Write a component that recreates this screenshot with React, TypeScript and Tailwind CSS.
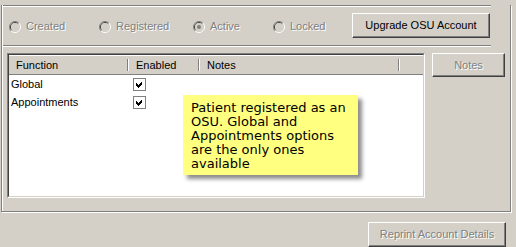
import React from "react"

const etched = "text-[#808080] [text-shadow:1px_1px_0_#fff]"
const raised =
    "border border-t-white border-l-white border-r-[#404040] border-b-[#404040] shadow-[inset_-1px_-1px_0_#808080] bg-[#d4d0c8]"

const Radio = ({ label, checked, width }: { label: string; checked?: boolean; width: string }) => (
    <div className={`flex items-center gap-[5px] ${width}`}>
        <svg width="12" height="12" viewBox="0 0 12 12">
            <path d="M2.1 9.9 A5.5 5.5 0 0 1 9.9 2.1" fill="none" stroke="#808080" />
            <path d="M9.9 2.1 A5.5 5.5 0 0 1 2.1 9.9" fill="none" stroke="#ffffff" />
            <path d="M2.8 9.2 A4.5 4.5 0 0 1 9.2 2.8" fill="none" stroke="#404040" />
            <path d="M9.2 2.8 A4.5 4.5 0 0 1 2.8 9.2" fill="none" stroke="#d4d0c8" />
            <circle cx="6" cy="6" r="4" fill="#d4d0c8" />
            {checked && <circle cx="6" cy="6" r="2" fill="#808080" />}
        </svg>
        <span className={etched}>{label}</span>
    </div>
)

const Check = () => (
    <div className="w-[13px] h-[13px] border border-[#808080] bg-white flex items-center justify-center">
        <svg width="9" height="9" viewBox="0 0 9 9" shapeRendering="crispEdges">
            <path d="M1 3h1v1h1v1h1v-1h1v-1h1v-1h1v3h-1v1h-1v1h-1v1h-1v-1h-1v-1h-1z" fill="#000" />
        </svg>
    </div>
)

const HeaderCell = ({ label, width }: { label: string; width: string }) => (
    <div className={`flex items-center justify-between h-full ${width}`}>
        <span className="pl-[7px] text-black">{label}</span>
        <span className="w-[2px] h-[12px] border-l border-l-[#808080] border-r border-r-white" />
    </div>
)

const Row = ({ name }: { name: string }) => (
    <div className="flex items-center h-[18px]">
        <div className="w-[120px] pl-[2px] text-black">{name}</div>
        <div className="pl-[4px]">
            <Check />
        </div>
    </div>
)

export default function App() {
    return (
        <div className="relative w-[516px] h-[247px] overflow-hidden bg-[#d4d0c8] font-['Liberation_Sans',Arial,sans-serif] text-[11px] leading-none">
            {/* Group box */}
            <div className="ml-[1px] w-[510px] h-[207px] border-l border-r border-b border-[#808080] shadow-[inset_1px_0_0_#fff,1px_1px_0_#fff]">
                <div className="mt-[5px] ml-[1px] w-[488px] h-[2px] border-t border-t-[#808080] border-b border-b-white" />

                <div className="mt-[6px] ml-[1px] w-[488px] h-[25px] flex items-center justify-between">
                    <div className="flex items-center pl-[6px] pt-[2px]">
                        <Radio label="Created" width="w-[90px]" />
                        <Radio label="Registered" width="w-[94px]" />
                        <Radio label="Active" checked width="w-[80px]" />
                        <Radio label="Locked" width="w-[70px]" />
                    </div>
                    <button className={`w-[138px] h-[25px] mr-[1px] ${raised} text-black`}>Upgrade OSU Account</button>
                </div>

                <div className="mt-[7px] ml-[1px] w-[488px] h-[2px] border-t border-t-[#808080] border-b border-b-white" />

                <div className="flex mt-[6px] ml-[5px]">
                    {/* List view */}
                    <div className="w-[418px] h-[145px] border border-t-[#808080] border-l-[#808080] border-r-white border-b-white">
                        <div className="w-full h-full border border-t-[#404040] border-l-[#404040] border-r-[#d4d0c8] border-b-[#d4d0c8] bg-white">
                            <div className="flex h-[20px] bg-[#d4d0c8] border-t border-t-white border-b border-b-[#808080]">
                                <HeaderCell label="Function" width="w-[120px]" />
                                <HeaderCell label="Enabled" width="w-[71px]" />
                                <HeaderCell label="Notes" width="w-[200px]" />
                            </div>
                            <Row name="Global" />
                            <Row name="Appointments" />
                        </div>
                    </div>
                    <button className={`ml-[7px] w-[73px] h-[24px] ${raised} ${etched}`}>Notes</button>
                </div>
            </div>

            <button className={`mt-[10px] ml-[368px] w-[138px] h-[25px] ${raised} ${etched}`}>Reprint Account Details</button>

            {/* Tooltip note */}
            <div className="absolute left-[183px] top-[95px] w-[175px] h-[80px] bg-[#ffff80] pl-[8px] pr-[6px] pt-[6px] shadow-[4px_4px_4px_rgba(0,0,0,0.45)] font-['DejaVu_Sans',Verdana,sans-serif] text-[13px] leading-[14px] text-black">
                Patient registered as an OSU. Global and Appointments options are the only ones available
            </div>
        </div>
    )
}
